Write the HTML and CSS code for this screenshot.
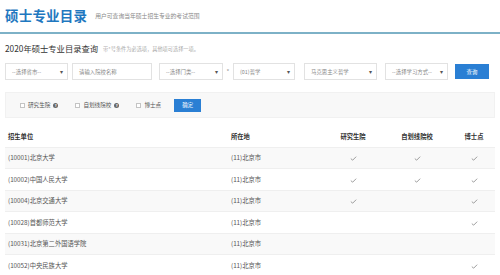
FILE: index.html
```html
<!DOCTYPE html>
<html lang="zh">
<head>
<meta charset="utf-8">
<link rel="stylesheet" href="styles.css">
</head>
<body>
<div class="header">
  <h1 class="title">硕士专业目录</h1>
  <span class="subtitle">用户可查询当年硕士招生专业的考试范围</span>
</div>
<div class="main">
  <div class="search-head">
    <h2 class="search-title">2020年硕士专业目录查询</h2>
    <span class="hint">带*号条件为必选项，其他项可选择一项。</span>
  </div>
  <div class="form-row">
    <div class="sel w-prov"><span>--选择省市--</span><i class="arr">▾</i></div>
    <div class="inp w-name"><span>请输入院校名称</span></div>
    <div class="sel w-cat"><span>--选择门类--</span><i class="arr">▾</i></div>
    <span class="star">*</span>
    <div class="sel w-sub"><span>(01)哲学</span><i class="arr">▾</i></div>
    <div class="sel w-maj"><span>马克思主义哲学</span><i class="arr">▾</i></div>
    <div class="sel w-mode"><span>--选择学习方式--</span><i class="arr">▾</i></div>
    <div class="btn btn-query">查询</div>
  </div>
  <div class="filter">
    <label class="chk"><span class="box"></span>研究生院<span class="q">?</span></label>
    <label class="chk"><span class="box"></span>自划线院校<span class="q">?</span></label>
    <label class="chk"><span class="box"></span>博士点</label>
    <div class="btn btn-ok">确定</div>
  </div>
  <table class="tbl">
    <colgroup>
      <col class="c1"><col class="c2"><col class="c3"><col class="c4"><col class="c5">
    </colgroup>
    <thead>
      <tr><th class="l">招生单位</th><th class="l">所在地</th><th>研究生院</th><th>自划线院校</th><th>博士点</th></tr>
    </thead>
    <tbody>
      <tr><td class="l">(10001)北京大学</td><td class="l">(11)北京市</td><td><svg class="ck" viewBox="0 0 8 6"><path d="M0.8 3.2 L3 5 L7.2 0.8"/></svg></td><td><svg class="ck" viewBox="0 0 8 6"><path d="M0.8 3.2 L3 5 L7.2 0.8"/></svg></td><td><svg class="ck" viewBox="0 0 8 6"><path d="M0.8 3.2 L3 5 L7.2 0.8"/></svg></td></tr>
      <tr><td class="l">(10002)中国人民大学</td><td class="l">(11)北京市</td><td><svg class="ck" viewBox="0 0 8 6"><path d="M0.8 3.2 L3 5 L7.2 0.8"/></svg></td><td><svg class="ck" viewBox="0 0 8 6"><path d="M0.8 3.2 L3 5 L7.2 0.8"/></svg></td><td><svg class="ck" viewBox="0 0 8 6"><path d="M0.8 3.2 L3 5 L7.2 0.8"/></svg></td></tr>
      <tr><td class="l">(10004)北京交通大学</td><td class="l">(11)北京市</td><td><svg class="ck" viewBox="0 0 8 6"><path d="M0.8 3.2 L3 5 L7.2 0.8"/></svg></td><td></td><td><svg class="ck" viewBox="0 0 8 6"><path d="M0.8 3.2 L3 5 L7.2 0.8"/></svg></td></tr>
      <tr><td class="l">(10028)首都师范大学</td><td class="l">(11)北京市</td><td></td><td></td><td><svg class="ck" viewBox="0 0 8 6"><path d="M0.8 3.2 L3 5 L7.2 0.8"/></svg></td></tr>
      <tr><td class="l">(10031)北京第二外国语学院</td><td class="l">(11)北京市</td><td></td><td></td><td></td></tr>
      <tr><td class="l">(10052)中央民族大学</td><td class="l">(11)北京市</td><td></td><td></td><td><svg class="ck" viewBox="0 0 8 6"><path d="M0.8 3.2 L3 5 L7.2 0.8"/></svg></td></tr>
    </tbody>
  </table>
</div>
</body>
</html>
```

FILE: styles.css
```css
* { box-sizing: border-box; }
html, body { margin: 0; padding: 0; background: #fff; }
body {
  width: 500px;
  height: 275px;
  overflow: hidden;
  font-family: "Noto Sans CJK SC", "Noto Sans", sans-serif;
  color: #333;
}
.header {
  height: 34px;
  display: flex;
  align-items: center;
  padding: 0 5px 2px;
  border-bottom: 2px solid #7db1c7;
}
.title {
  margin: 0;
  font-size: 13.5px;
  line-height: 18px;
  font-weight: 700;
  color: #1f78c0;
  letter-spacing: 0.2px;
}
.subtitle {
  margin-left: 8px;
  font-size: 5.8px;
  color: #888;
}
.main { padding: 0 5px; }
.search-head {
  display: flex;
  align-items: center;
  margin-top: 9px;
  height: 10px;
}
.search-title {
  margin: 0;
  font-size: 8.3px;
  font-weight: 400;
  color: #333;
  line-height: 10px;
}
.hint {
  margin-left: 5px;
  font-size: 5.2px;
  color: #aaa;
}
.form-row {
  display: flex;
  align-items: center;
  margin-top: 10px;
  height: 17px;
}
.sel, .inp {
  height: 17px;
  border: 1px solid #e2e2e2;
  background: #fff;
  display: flex;
  align-items: center;
  justify-content: space-between;
  padding: 0 4px 0 6px;
  font-size: 5.4px;
  color: #888;
}
.arr {
  font-style: normal;
  font-size: 6px;
  color: #555;
}
.w-prov { width: 63px; }
.w-name { width: 80px; margin-left: 4px; }
.w-cat { width: 64px; margin-left: 7px; }
.star { font-size: 6px; color: #999; width: 10px; text-align: center; }
.w-sub { width: 62px; }
.w-maj { width: 73px; margin-left: 9px; }
.w-mode { width: 63px; margin-left: 8px; }
.btn {
  background: #2a7fd4;
  color: #fff;
  display: flex;
  align-items: center;
  justify-content: center;
  font-size: 5.4px;
}
.btn-query { width: 34px; height: 15px; margin-left: 7px; }
.filter {
  margin-top: 12px;
  height: 26px;
  background: #f8f8f8;
  border: 1px solid #f1f1f1;
  display: flex;
  align-items: center;
  padding-left: 14px;
  font-size: 5.6px;
  color: #555;
}
.chk {
  display: flex;
  align-items: center;
  margin-right: 17px;
}
.box {
  width: 5px;
  height: 5px;
  border: 1px solid #c4c4c4;
  background: #fff;
  margin-right: 3px;
}
.q {
  display: inline-flex;
  align-items: center;
  justify-content: center;
  width: 5px;
  height: 5px;
  border-radius: 50%;
  background: #666;
  color: #fff;
  font-size: 4px;
  font-weight: 700;
  margin-left: 3px;
}
.btn-ok { width: 27px; height: 13px; margin-left: -4px; }
.tbl {
  margin-top: 8px;
  width: 490px;
  border-collapse: collapse;
  table-layout: fixed;
  font-size: 6.3px;
}
.c1 { width: 223px; }
.c2 { width: 97px; }
.c3 { width: 56px; }
.c4 { width: 72px; }
.c5 { width: 42px; }
.tbl th, .tbl td {
  height: 21.5px;
  padding: 0 3px;
  text-align: center;
  vertical-align: middle;
  border-bottom: 1px solid #efefef;
}
.tbl th {
  height: 21px;
  font-weight: 700;
  color: #333;
}
.tbl td { color: #555; }
.tbl .l { text-align: left; }
.tbl tbody tr:nth-child(odd) td { background: #f9f9f9; }
.ck {
  width: 7px;
  height: 5px;
  display: inline-block;
  vertical-align: middle;
}
.ck path {
  fill: none;
  stroke: #8a8a8a;
  stroke-width: 1;
}
```
